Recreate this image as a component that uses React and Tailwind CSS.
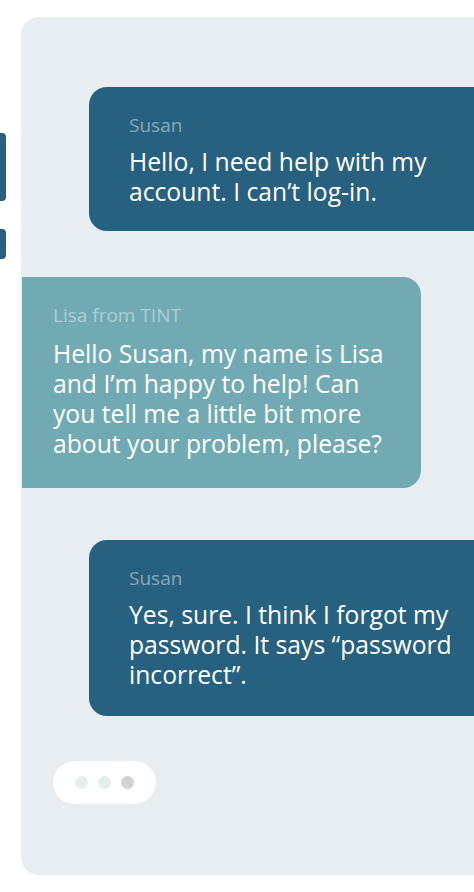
export default function App() {
  const font = { fontFamily: "'Open Sans', Lato, sans-serif" };

  return (
    <div className="w-[474px] h-[892px] overflow-hidden bg-white flex" style={font}>
      <div className="w-[21px] shrink-0 flex flex-col pt-[133px] gap-[28px]">
        <div className="w-[6px] h-[68px] rounded-r-[4px] bg-[#27617f]" />
        <div className="w-[6px] h-[30px] rounded-r-[4px] bg-[#27617f]" />
      </div>

      <div className="mt-[17px] h-[858px] w-[500px] shrink-0 rounded-l-[18px] bg-[#e8edf1] flex flex-col pt-[70px] pl-[1px]">
        <div className="ml-[67px] rounded-l-[18px] bg-[#27617f] pl-10 pt-[26px] pb-[24px]">
          <div className="text-[19px] leading-[24px] text-[#86a9bd]">Susan</div>
          <div className="mt-[10px] text-[24.7px] leading-[30px] text-white">
            Hello, I need help with my
            <br />
            account. I can’t log-in.
          </div>
        </div>

        <div className="mt-[46px] w-[399px] rounded-r-[18px] bg-[#72aab4] pl-[31px] pt-[26px] pb-[29px]">
          <div className="text-[19px] leading-[24px] text-[#abcfd5]">Lisa from TINT</div>
          <div className="mt-[12px] text-[24.7px] leading-[30px] text-white">
            Hello Susan, my name is Lisa
            <br />
            and I’m happy to help! Can
            <br />
            you tell me a little bit more
            <br />
            about your problem, please?
          </div>
        </div>

        <div className="mt-[52px] ml-[67px] rounded-l-[18px] bg-[#27617f] pl-10 pt-[26px] pb-[26px]">
          <div className="text-[19px] leading-[24px] text-[#86a9bd]">Susan</div>
          <div className="mt-[10px] text-[24.7px] leading-[30px] text-white">
            Yes, sure. I think I forgot my
            <br />
            password. It says “password
            <br />
            incorrect”.
          </div>
        </div>

        <div className="mt-[45px] ml-[31px] w-[103px] h-[43px] rounded-full bg-white flex items-center justify-center gap-[10px]">
          <span className="w-[13px] h-[13px] rounded-full bg-[#e8eef0]" />
          <span className="w-[13px] h-[13px] rounded-full bg-[#e8eef0]" />
          <span className="w-[13px] h-[13px] rounded-full bg-[#d2d2d2]" />
        </div>
      </div>
    </div>
  );
}
